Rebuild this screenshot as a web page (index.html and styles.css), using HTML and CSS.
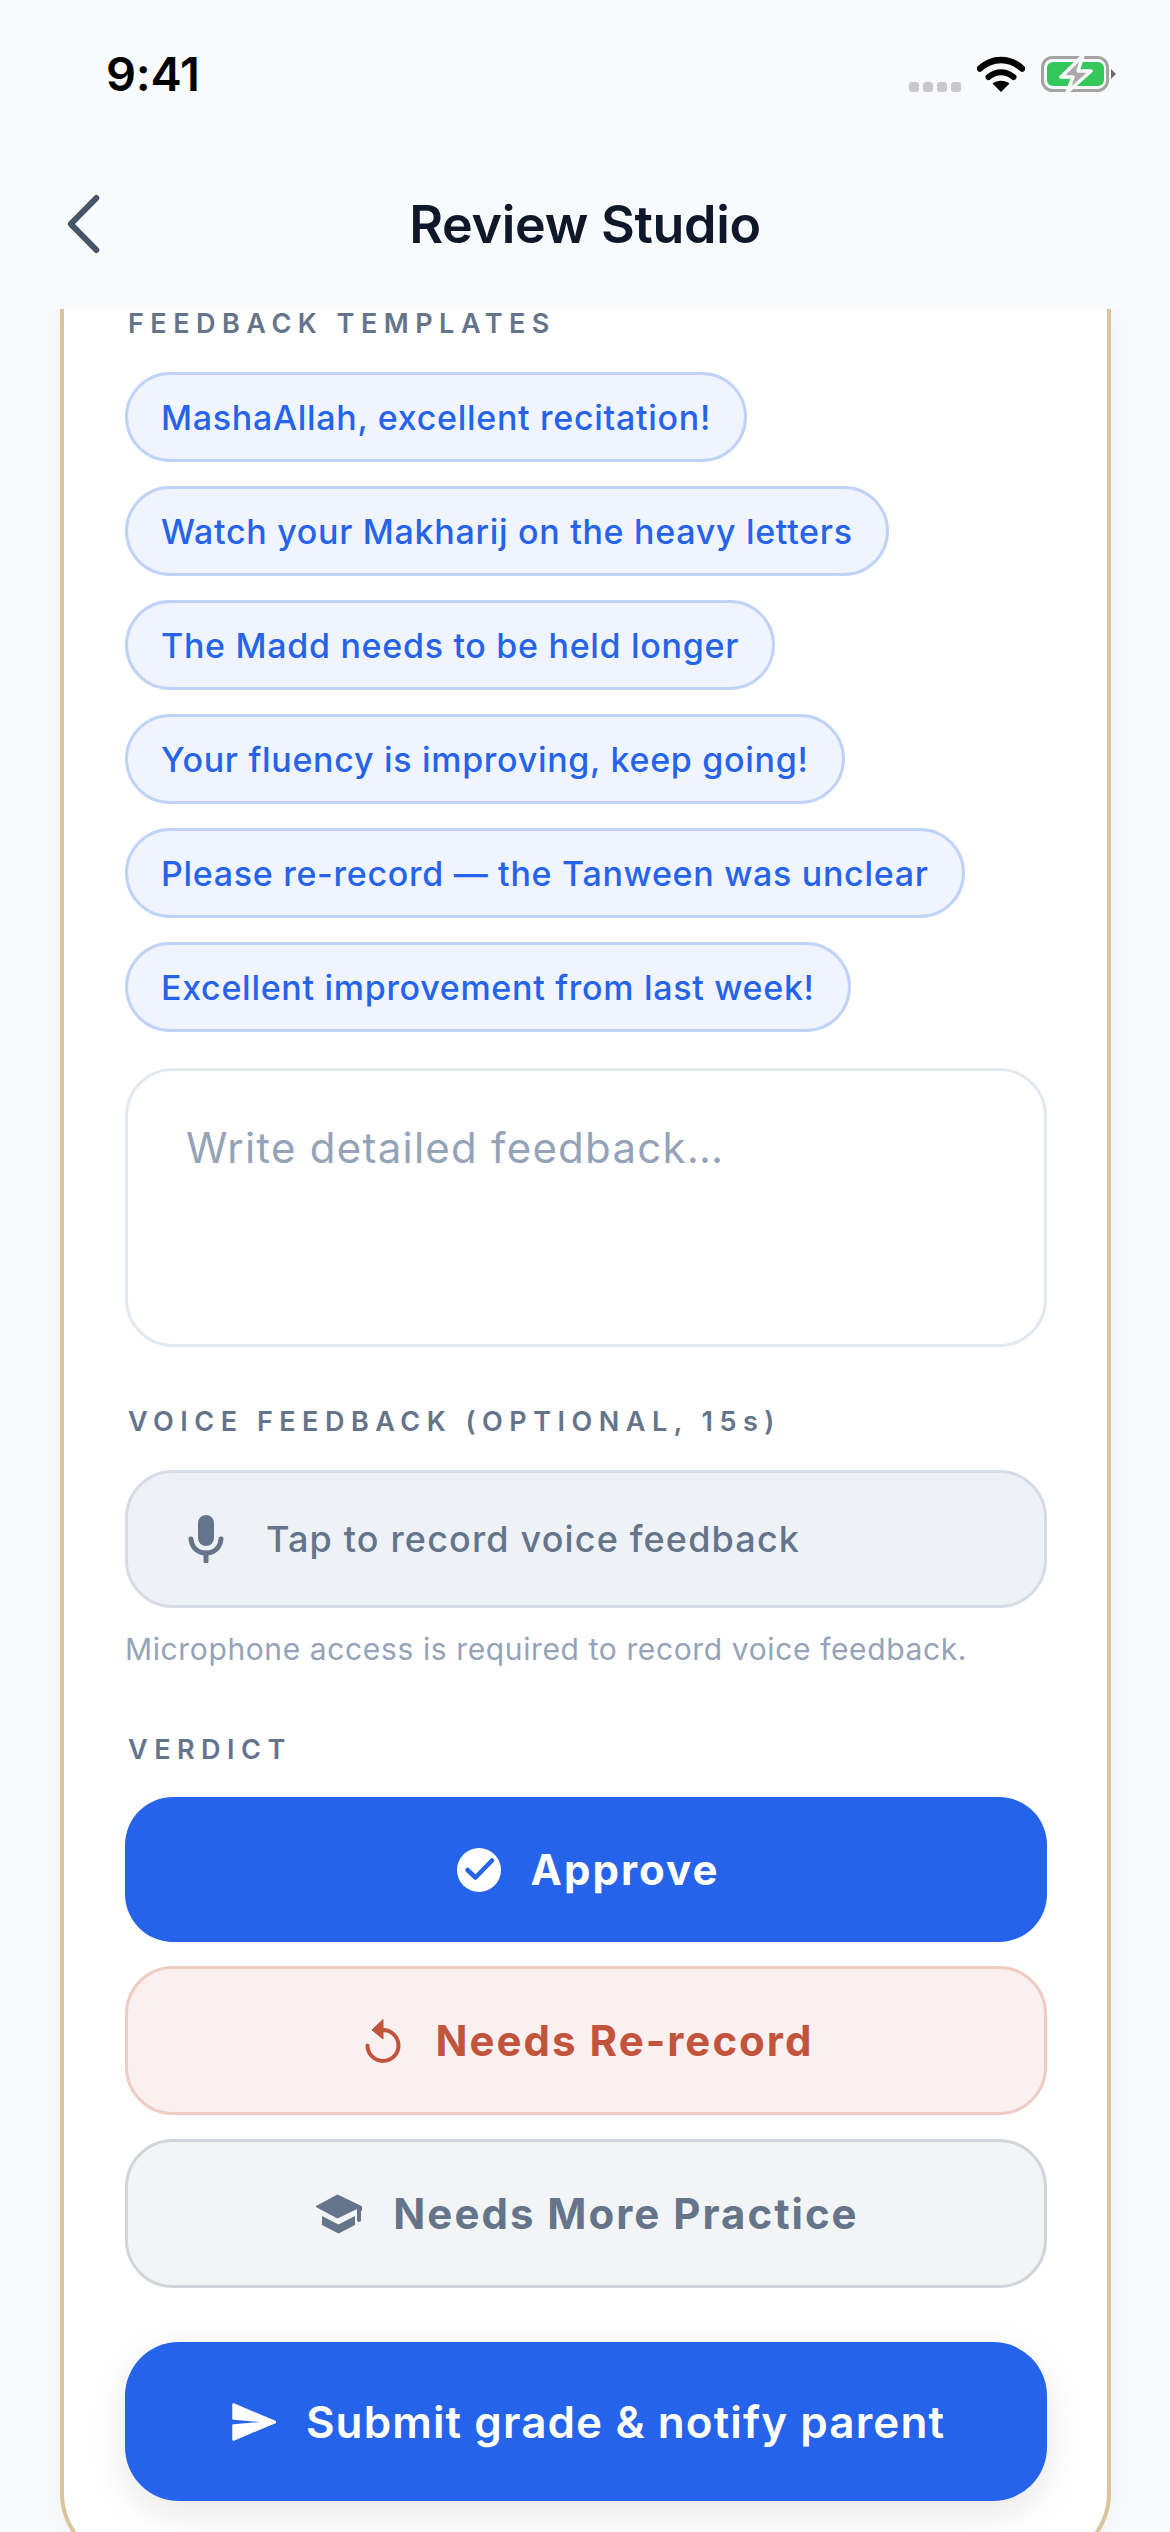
FILE: index.html
```html
<!DOCTYPE html>
<html lang="en">
<head>
    <meta charset="UTF-8">
    <meta name="viewport" content="width=device-width, initial-scale=1.0">
    <title>Review Studio</title>
    <link rel="stylesheet" href="styles.css">
</head>
<body>
    <header class="top">
        <div class="status">
            <span class="time">9:41</span>
            <div class="status-icons">
                <div class="dots"><i></i><i></i><i></i><i></i></div>
                <svg class="wifi" viewBox="0 0 48 37" aria-hidden="true">
                    <path d="M3 13.500C15 2 33 2 45 13.500" fill="none" stroke="#000" stroke-width="6.500" stroke-linecap="round"/>
                    <path d="M11.500 22C19 15.500 29 15.500 36.500 22" fill="none" stroke="#000" stroke-width="6" stroke-linecap="round"/>
                    <path d="M24 37L15.500 28.500C20.500 24.800 27.500 24.800 32.500 28.500Z" fill="#000"/>
                </svg>
                <svg class="battery" viewBox="0 0 76 40" aria-hidden="true">
                    <rect x="1.500" y="3.500" width="65" height="33" rx="10" fill="none" stroke="#a3a3a3" stroke-width="3"/>
                    <rect x="6" y="8" width="57" height="24" rx="6" fill="#34c759"/>
                    <path d="M70 15l5 5-5 5z" fill="#6f6f6f"/>
                    <path d="M42 1.500L20 23h12l-6 15.500L50 17H37z" fill="#a9a9a9" stroke="#f8fafc" stroke-width="3.500" stroke-linejoin="round"/>
                </svg>
            </div>
        </div>
        <nav class="nav">
            <svg class="back" viewBox="0 0 36 60" aria-label="Back">
                <path d="M32 4L5 30l27 26" fill="none" stroke="#475569" stroke-width="6" stroke-linecap="round" stroke-linejoin="round" transform="matrix(.95 0 0 1 1 0)"/>
            </svg>
            <h1>Review Studio</h1>
        </nav>
    </header>

    <main class="view">
        <section class="card">
            <h2 class="label label-first">Feedback templates</h2>
            <div class="chips">
                <button class="chip">MashaAllah, excellent recitation!</button>
                <button class="chip">Watch your Makharij on the heavy letters</button>
                <button class="chip">The Madd needs to be held longer</button>
                <button class="chip">Your fluency is improving, keep going!</button>
                <button class="chip">Please re-record — the Tanween was unclear</button>
                <button class="chip">Excellent improvement from last week!</button>
            </div>
            <textarea class="notes" placeholder="Write detailed feedback…" aria-label="Detailed feedback"></textarea>

            <h2 class="label label-voice">Voice feedback (optional, 15<span class="lower">s</span>)</h2>
            <button class="record">
                <svg class="mic" viewBox="0 0 36 48" aria-hidden="true">
                    <rect x="10" y="0" width="16" height="31" rx="8" fill="#64748b"/>
                    <path d="M3 24c1 9 7 14 15 14s14-5 15-14" fill="none" stroke="#64748b" stroke-width="5" stroke-linecap="round"/>
                    <path d="M18 38v8" stroke="#64748b" stroke-width="5" stroke-linecap="round"/>
                </svg>
                <span>Tap to record voice feedback</span>
            </button>
            <p class="hint">Microphone access is required to record voice feedback.</p>

            <h2 class="label label-verdict">Verdict</h2>
            <div class="verdicts">
                <button class="verdict approve">
                    <svg class="ic-check" viewBox="0 0 44 44" aria-hidden="true">
                        <circle cx="22" cy="22" r="22" fill="#fff"/>
                        <path d="M10.500 23l8 7.500L35 13.500" transform="translate(0 -1)" fill="none" stroke="#2563eb" stroke-width="4.500" stroke-linecap="round" stroke-linejoin="round"/>
                    </svg>
                    Approve
                </button>
                <button class="verdict rerecord">
                    <svg class="ic-redo" viewBox="0 0 36 44" aria-hidden="true">
                        <path d="M2.500 26.500A15.500 15.500 0 1 0 18 11" fill="none" stroke="#c2543d" stroke-width="4" stroke-linecap="round"/>
                        <path d="M18 0.500V20L7 11Z" fill="#c2543d" stroke="#c2543d" stroke-width="1" stroke-linejoin="round"/>
                    </svg>
                    Needs Re-record
                </button>
                <button class="verdict practice">
                    <svg class="ic-cap" viewBox="0 0 48 40" aria-hidden="true">
                        <path d="M22.500 1L1 12.500 22.500 24 43 14v2.500h3.500v-4z" fill="#64748b" stroke="#64748b" stroke-linejoin="round"/>
                        <path d="M7 22l16.500 8.500L40 22v9L23.500 39.500 7 31z" fill="#64748b"/>
                        <path d="M44 15v11" stroke="#64748b" stroke-width="4" stroke-linecap="round"/>
                    </svg>
                    Needs More Practice
                </button>
            </div>
            <button class="submit">
                <svg class="ic-send" viewBox="0 0 44 40" aria-hidden="true">
                    <path d="M1.500 2.500L43 20 1.500 16.500zM1.500 23.500L43 20 1.500 37.500z" fill="#fff" stroke="#fff" stroke-width="2.500" stroke-linejoin="round"/>
                </svg>
                Submit grade &amp; notify parent
            </button>
        </section>
    </main>
</body>
</html>
```

FILE: styles.css
```css
* {
    box-sizing: border-box;
}
html, body {
    margin: 0;
    padding: 0;
    height: 2532px;
    overflow: hidden;
}
body {
    font-family: 'Inter', 'Liberation Sans', sans-serif;
    background-color: #f8fafc;
    display: flex;
    flex-direction: column;
}
button, textarea {
    font-family: inherit;
    margin: 0;
}

/* header */
.top {
    height: 309px;
    flex-shrink: 0;
    background: #f9fafc;
    position: relative;
    z-index: 2;
}
.status {
    height: 185px;
    padding: 54px 53px 0 106px;
    display: flex;
    justify-content: space-between;
    align-items: flex-start;
}
.time {
    font-size: 47px;
    font-weight: 600;
    line-height: 40px;
    color: #000;
    letter-spacing: -0.3px;
}
.status-icons {
    display: flex;
    align-items: flex-start;
    gap: 16px;
}
.dots {
    display: flex;
    gap: 4px;
    margin-top: 28px;
    margin-right: 0;
}
.dots i {
    display: block;
    width: 10px;
    height: 10px;
    border-radius: 3px;
    background: #c7c7cc;
}
.wifi {
    width: 48px;
    height: 37px;
    margin-top: 1px;
}
.battery {
    width: 76px;
    height: 40px;
}
.nav {
    height: 78px;
    position: relative;
    display: flex;
    justify-content: center;
    align-items: center;
}
.nav h1 {
    margin: 0;
    font-size: 52px;
    font-weight: 600;
    color: #0f172a;
    letter-spacing: -0.3px;
}
.back {
    position: absolute;
    left: 65px;
    top: 9px;
    width: 36px;
    height: 60px;
}

/* card */
.view {
    flex: 1;
    min-height: 0;
}
.card {
    margin: 0 59px 0 60px;
    padding: 3px 60px 60px 61px;
    background: #fff;
    border: 4px solid #d9c59c;
    border-top: 0;
    border-radius: 0 0 72px 72px;
    box-shadow: 0 0 30px rgba(15, 23, 42, 0.04);
}
.label {
    margin: 0;
    font-size: 27px;
    font-weight: 600;
    line-height: 24px;
    color: #64748b;
    text-transform: uppercase;
    letter-spacing: 6.500px;
    padding-left: 3px;
}
.lower {
    text-transform: none;
}
.chips {
    display: flex;
    flex-direction: column;
    align-items: flex-start;
    gap: 24px;
    margin-top: 36px;
}
.chip {
    height: 90px;
    padding: 0 33px;
    border: 3px solid #bfd2f8;
    border-radius: 45px;
    background: #eff4ff;
    color: #2563eb;
    font-size: 34px;
    font-weight: 500;
    letter-spacing: 0.7px;
    white-space: nowrap;
}
.notes {
    display: block;
    width: 100%;
    height: 279px;
    margin-top: 36px;
    padding: 52px 58px;
    border: 3px solid #e2e8f0;
    border-radius: 48px;
    background: #fff;
    font-size: 42px;
    line-height: 50px;
    letter-spacing: 1.250px;
    resize: none;
    outline: none;
}
.notes::placeholder {
    color: #94a3b8;
    opacity: 1;
}
.label-voice {
    margin-top: 63px;
}
.record {
    display: flex;
    align-items: center;
    gap: 42px;
    width: 100%;
    height: 138px;
    margin-top: 36px;
    padding: 0 60px;
    background: #eef2f7;
    border: 3px solid #d5dce8;
    border-radius: 48px;
    color: #64748b;
    font-size: 36px;
    font-weight: 500;
    letter-spacing: 1.150px;
}
.mic {
    width: 36px;
    height: 48px;
    flex-shrink: 0;
}
.hint {
    margin: 23px 0 0;
    font-size: 30px;
    line-height: 36px;
    color: #94a3b8;
    letter-spacing: 0.62px;
}
.label-verdict {
    margin-top: 71px;
}
.verdicts {
    display: flex;
    flex-direction: column;
    gap: 24px;
    margin-top: 35px;
}
.verdict, .submit {
    display: flex;
    justify-content: center;
    align-items: center;
    width: 100%;
    font-weight: 700;
    padding: 0;
}
.verdict {
    height: 149px;
    border-radius: 48px;
    font-size: 42px;
    letter-spacing: 2px;
    gap: 30px;
}
.approve {
    height: 145px;
    padding-left: 4px;
    background: #2563eb;
    color: #fff;
    border: 0;
}
.rerecord {
    padding-left: 6px;
    background: #faf0ef;
    color: #c2543d;
    border: 3px solid #efcbc4;
}
.practice {
    padding-left: 2px;
    background: #f3f4f6;
    color: #64748b;
    border: 3px solid #d1d5db;
}
.ic-check { width: 44px; height: 44px; }
.ic-redo { width: 36px; height: 44px; margin-right: 5px; }
.ic-cap { width: 48px; height: 40px; }
.submit {
    height: 159px;
    margin-top: 54px;
    padding-left: 5px;
    gap: 30px;
    background: #2563eb;
    color: #fff;
    border: 0;
    border-radius: 54px;
    font-size: 44px;
    font-weight: 600;
    letter-spacing: 1.100px;
    box-shadow: 0 12px 36px rgba(15, 23, 42, 0.1);
}
.ic-send { width: 44px; height: 40px; }
```
